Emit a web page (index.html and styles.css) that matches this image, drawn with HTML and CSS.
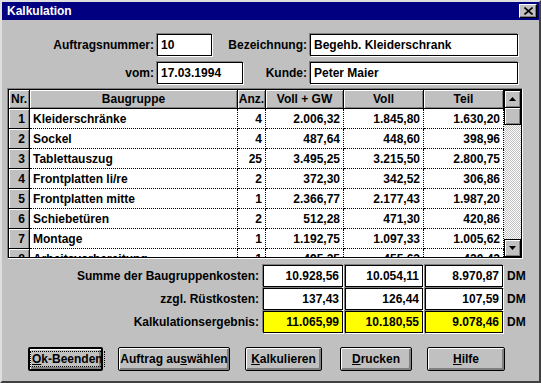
FILE: index.html
```html
<!DOCTYPE html>
<html lang="de">
<head>
    <meta charset="UTF-8">
    <title>Kalkulation</title>
    <link rel="stylesheet" href="styles.css">
</head>
<body>
<div class="window">
    <div class="titlebar">
        <span class="title">Kalkulation</span>
        <span class="close">
            <svg width="9" height="8" viewBox="0 0 9 8"><path d="M0.5 0.5 L8.5 7.5 M8.5 0.5 L0.5 7.5" stroke="#000" stroke-width="1.6"/></svg>
        </span>
    </div>

    <div class="fields">
        <div class="field-row">
            <label class="lbl lbl-a">Auftragsnummer:</label>
            <div class="edit edit-nr">10</div>
            <label class="lbl lbl-b1">Bezeichnung:</label>
            <div class="edit edit-wide">Begehb. Kleiderschrank</div>
        </div>
        <div class="field-row">
            <label class="lbl lbl-a">vom:</label>
            <div class="edit edit-date">17.03.1994</div>
            <label class="lbl lbl-b2">Kunde:</label>
            <div class="edit edit-wide">Peter Maier</div>
        </div>
    </div>

    <div class="grid-box">
        <div class="grid-inner">
            <div class="grid">
                <div class="hd">Nr.</div>
                <div class="hd">Baugruppe</div>
                <div class="hd">Anz.</div>
                <div class="hd">Voll + GW</div>
                <div class="hd">Voll</div>
                <div class="hd">Teil</div>

                <div class="rn">1</div><div class="cell">Kleiderschränke</div><div class="cell num">4</div><div class="cell num">2.006,32</div><div class="cell num">1.845,80</div><div class="cell num">1.630,20</div>
                <div class="rn">2</div><div class="cell">Sockel</div><div class="cell num">4</div><div class="cell num">487,64</div><div class="cell num">448,60</div><div class="cell num">398,96</div>
                <div class="rn">3</div><div class="cell">Tablettauszug</div><div class="cell num">25</div><div class="cell num">3.495,25</div><div class="cell num">3.215,50</div><div class="cell num">2.800,75</div>
                <div class="rn">4</div><div class="cell">Frontplatten li/re</div><div class="cell num">2</div><div class="cell num">372,30</div><div class="cell num">342,52</div><div class="cell num">306,86</div>
                <div class="rn">5</div><div class="cell">Frontplatten mitte</div><div class="cell num">1</div><div class="cell num">2.366,77</div><div class="cell num">2.177,43</div><div class="cell num">1.987,20</div>
                <div class="rn">6</div><div class="cell">Schiebetüren</div><div class="cell num">2</div><div class="cell num">512,28</div><div class="cell num">471,30</div><div class="cell num">420,86</div>
                <div class="rn">7</div><div class="cell">Montage</div><div class="cell num">1</div><div class="cell num">1.192,75</div><div class="cell num">1.097,33</div><div class="cell num">1.005,62</div>
                <div class="rn">8</div><div class="cell">Arbeitsvorbereitung</div><div class="cell num">1</div><div class="cell num">495,25</div><div class="cell num">455,63</div><div class="cell num">420,42</div>
            </div>
            <div class="vscroll">
                <div class="sb-btn">
                    <svg width="7" height="4" viewBox="0 0 7 4"><path d="M3.5 0 L7 4 L0 4 Z" fill="#000"/></svg>
                </div>
                <div class="sb-thumb"></div>
                <div class="sb-track"></div>
                <div class="sb-btn">
                    <svg width="7" height="4" viewBox="0 0 7 4"><path d="M0 0 L7 0 L3.5 4 Z" fill="#000"/></svg>
                </div>
            </div>
        </div>
    </div>

    <div class="totals">
        <div class="tot-row">
            <span class="tot-label">Summe der Baugruppenkosten:</span>
            <span class="box box-a">10.928,56</span>
            <span class="box">10.054,11</span>
            <span class="box">8.970,87</span>
            <span class="unit">DM</span>
        </div>
        <div class="tot-row">
            <span class="tot-label">zzgl. Rüstkosten:</span>
            <span class="box box-a">137,43</span>
            <span class="box">126,44</span>
            <span class="box">107,59</span>
            <span class="unit">DM</span>
        </div>
        <div class="tot-row">
            <span class="tot-label">Kalkulationsergebnis:</span>
            <span class="box box-a result">11.065,99</span>
            <span class="box result">10.180,55</span>
            <span class="box result">9.078,46</span>
            <span class="unit">DM</span>
        </div>
    </div>

    <div class="buttons">
        <button class="btn btn-default btn-ok"><span class="focus"><u>O</u>k-Beenden</span></button>
        <button class="btn btn-auftrag">Auftrag au<u>s</u>wählen</button>
        <button class="btn btn-kalk"><u>K</u>alkulieren</button>
        <button class="btn btn-druck"><u>D</u>rucken</button>
        <button class="btn btn-hilfe"><u>H</u>ilfe</button>
    </div>
</div>
</body>
</html>
```

FILE: styles.css
```css
* {
    box-sizing: border-box;
}

body {
    margin: 0;
    background: #c0c0c0;
    font-family: "Liberation Sans", Arial, sans-serif;
    font-weight: bold;
    font-size: 12px;
    color: #000;
}

.window {
    width: 541px;
    height: 383px;
    background: #c0c0c0;
    border: 2px solid;
    border-color: #dfdfdf #404040 #404040 #dfdfdf;
    display: flex;
    flex-direction: column;
}

/* title bar */
.titlebar {
    height: 18px;
    background: #000080;
    color: #fff;
    display: flex;
    align-items: center;
    justify-content: space-between;
    padding-left: 5px;
}

.title {
    font-size: 12px;
}

.close {
    width: 18px;
    height: 14px;
    margin-right: 2px;
    background: #c0c0c0;
    border: 1px solid;
    border-color: #fff #000 #000 #fff;
    box-shadow: inset -1px -1px 0 #808080;
    display: flex;
    align-items: center;
    justify-content: center;
}

/* header fields */
.fields {
    margin-top: 14px;
    display: flex;
    flex-direction: column;
    gap: 6px;
}

.field-row {
    display: flex;
    align-items: center;
    height: 22px;
}

.lbl {
    text-align: right;
    padding-right: 3px;
    white-space: nowrap;
}

.lbl-a { width: 155px; }
.lbl-b1 { width: 98px; }
.lbl-b2 { width: 67px; }

.edit {
    height: 22px;
    background: #fff;
    border: 1px solid #000;
    box-shadow: -1px -1px 0 #808080, 1px 1px 0 #fff;
    padding: 0 3px;
    line-height: 20px;
    white-space: nowrap;
}

.edit-nr { width: 55px; }
.edit-date { width: 86px; }
.edit-wide { width: 208px; }

/* grid */
.grid-box {
    margin: 4px 0 0 5px;
    width: 516px;
    height: 171px;
    border: 1px solid;
    border-color: #808080 #fff #fff #808080;
}

.grid-inner {
    height: 100%;
    border: 1px solid #000;
    display: flex;
    overflow: hidden;
}

.grid {
    width: 495px;
    display: grid;
    grid-template-columns: 21px 208px 28px 78px 80px 80px;
    grid-template-rows: 19px;
    grid-auto-rows: 20px;
    align-content: start;
}

.hd {
    background: #c0c0c0;
    border-right: 1px solid #000;
    border-bottom: 1px solid #000;
    box-shadow: inset 1px 1px 0 #fff, inset -1px -1px 0 #808080;
    text-align: center;
    line-height: 18px;
}

.rn {
    background: #c0c0c0;
    border-right: 1px solid #000;
    border-bottom: 1px solid #000;
    box-shadow: inset 1px 1px 0 #fff, inset -1px 0 0 #808080;
    text-align: right;
    padding: 2px 4px 0 0;
    line-height: 17px;
}

.cell {
    background: #fff;
    border-right: 1px dotted #000;
    border-bottom: 1px dotted #000;
    padding: 2px 3px 0;
    line-height: 17px;
    white-space: nowrap;
    overflow: hidden;
}

.num {
    text-align: right;
}

/* scrollbar */
.vscroll {
    width: 17px;
    display: flex;
    flex-direction: column;
}

.sb-btn {
    height: 18px;
    background: #c0c0c0;
    border: 1px solid #000;
    box-shadow: inset 1px 1px 0 #fff, inset -1px -1px 0 #808080;
    display: flex;
    align-items: center;
    justify-content: center;
}

.sb-thumb {
    height: 17px;
    background: #c0c0c0;
    border: 1px solid #000;
    border-top: 0;
    box-shadow: inset 1px 1px 0 #fff, inset -1px -1px 0 #808080;
}

.sb-track {
    flex: 1;
    background: repeating-conic-gradient(#c0c0c0 0 25%, #fff 0 50%) 0 0 / 2px 2px;
}

/* totals */
.totals {
    margin-top: 6px;
    display: flex;
    flex-direction: column;
    gap: 1px;
}

.tot-row {
    display: flex;
    align-items: center;
    height: 22px;
}

.tot-label {
    width: 261px;
    text-align: right;
    padding-right: 4px;
    white-space: nowrap;
}

.box {
    width: 78px;
    height: 22px;
    margin-right: 2px;
    background: #fff;
    border: 1px solid #000;
    box-shadow: -1px -1px 0 #808080, 1px 1px 0 #fff;
    text-align: right;
    padding-right: 3px;
    line-height: 20px;
}

.box-a {
    width: 80px;
}

.result {
    background: #ffff00;
}

.unit {
    margin-left: 2px;
}

/* buttons */
.buttons {
    margin-top: 14px;
    padding-left: 26px;
    display: flex;
    gap: 15px;
}

.btn {
    height: 24px;
    background: #c0c0c0;
    border: 1px solid #000;
    border-radius: 2px;
    box-shadow: inset 1px 1px 0 #fff, inset -2px -2px 0 #808080;
    font-family: inherit;
    font-weight: bold;
    font-size: 12px;
    color: #000;
    padding: 0;
    white-space: nowrap;
}

.btn-default {
    border-width: 2px;
}

.focus {
    border: 1px dotted #000;
    padding: 0 1px;
}

.btn-ok { width: 75px; }
.btn-auftrag { width: 112px; }
.btn-kalk { width: 77px; }
.btn-druck { width: 72px; margin-left: 3px; }
.btn-hilfe { width: 78px; }
```
